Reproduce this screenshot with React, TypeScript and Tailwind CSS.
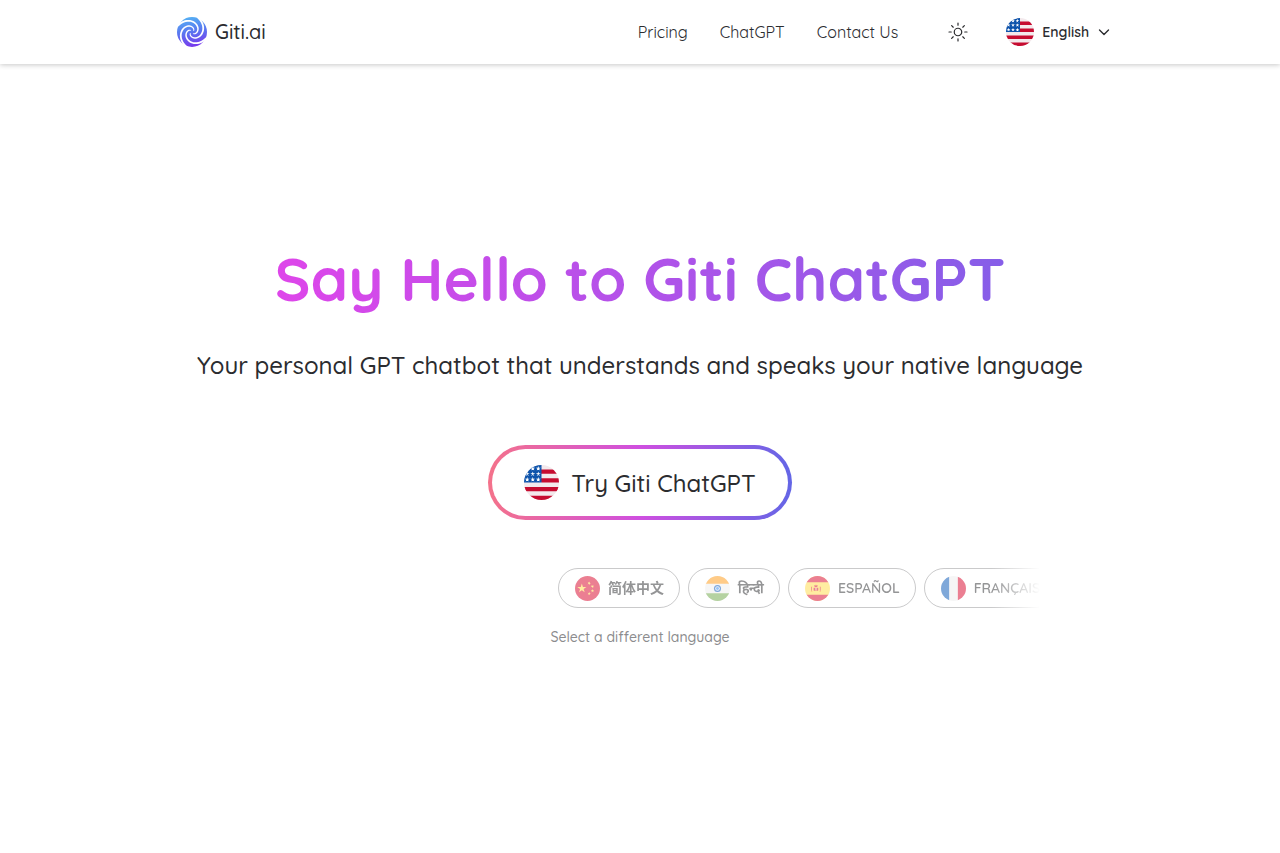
import React from 'react';

const STARS =
    'm187 243 57-41h-70l57 41-22-67zm-81 0 57-41H93l57 41-22-67zm-81 0 57-41H12l57 41-22-67zm162-81 57-41h-70l57 41-22-67zm-81 0 57-41H93l57 41-22-67zm-81 0 57-41H12l57 41-22-67Zm162-82 57-41h-70l57 41-22-67Zm-81 0 57-41H93l57 41-22-67zm-81 0 57-41H12l57 41-22-67Z';

const CN_STARS =
    'm140.1 155.8 22.1 68h71.5l-57.8 42.1 22.1 68-57.9-42-57.9 42 22.2-68-57.9-42.1H118zm163.4 240.7-16.9-20.8-25 9.7 14.5-22.5-16.9-20.9 25.9 6.9 14.6-22.5 1.4 26.8 26 6.9-25.1 9.6zm33.6-61 8-25.6-21.9-15.5 26.8-.4 7.9-25.6 8.7 25.4 26.8-.3-21.5 16 8.6 25.4-21.9-15.5zm45.3-147.6L370.6 212l19.2 18.7-26.5-3.8-11.8 24-4.6-26.4-26.6-3.8 23.8-12.5-4.6-26.5 19.2 18.7zm-78.2-73-2 26.7 24.9 10.1-26.1 6.4-1.9 26.8-14.1-22.8-26.1 6.4 17.3-20.5-14.2-22.7 24.9 10.1z';

type Country = 'us' | 'cn' | 'in' | 'es' | 'fr';

const FLAG_ART: Record<Country, React.ReactNode> = {
    us: (
        <>
            <path fill="#f3e9ec" d="M0 0h512v512H0z" />
            <path fill="#c60c30" d="M224 64h288v64H224Zm0 128h288v64H256ZM0 320h512v64H0Zm0 128h512v64H0Z" />
            <path fill="#0d53ab" d="M0 0h256v256H0Z" />
            <path fill="#fff" d={STARS} />
        </>
    ),
    cn: (
        <>
            <path fill="#d80027" d="M0 0h512v512H0z" />
            <path fill="#ffda44" d={CN_STARS} />
        </>
    ),
    in: (
        <>
            <path fill="#eee" d="M0 0h512v512H0z" />
            <path fill="#ff9811" d="M0 0h512v160H0z" />
            <path fill="#6da544" d="M0 352h512v160H0z" />
            <circle cx="256" cy="256" r="72" fill="#0052b4" />
            <circle cx="256" cy="256" r="48" fill="#eee" />
            <circle cx="256" cy="256" r="30" fill="#338af3" />
        </>
    ),
    es: (
        <>
            <path fill="#ffda44" d="M0 0h512v512H0z" />
            <path fill="#d80027" d="M0 0h512v128H0zM0 384h512v128H0z" />
            <path fill="#d80027" d="M144 304h-16v-80h16zm160 0h16v-80h-16zM176 240h44v52c0 14-44 14-44 0zM232 240h40v52c0 14-40 14-40 0zM188 190h72l-10 34h-52z" />
            <path fill="#ff9811" d="M120 208h32v14h-32zm176 0h32v14h-32zM120 306h32v14h-32zm176 0h32v14h-32zM216 172h16v24h-16z" />
            <circle cx="224" cy="264" r="14" fill="#eee" />
        </>
    ),
    fr: (
        <>
            <path fill="#eee" d="M167 0h178v512H167z" />
            <path fill="#0052b4" d="M0 0h167v512H0z" />
            <path fill="#d80027" d="M345 0h167v512H345z" />
        </>
    ),
};

const Flag: React.FC<{ country: Country; className: string }> = ({ country, className }) => (
    <svg viewBox="0 0 512 512" aria-hidden="true" className={`shrink-0 rounded-full ${className}`}>
        {FLAG_ART[country]}
    </svg>
);

// One tapered gap of the swirl, wide at the rim and thin at the centre
const swirlGap = (start: number) => {
    const steps = 28;
    const outer: string[] = [];
    const inner: string[] = [];
    for (let i = 0; i <= steps; i++) {
        const t = i / steps;
        const angle = ((start + 215 * t) * Math.PI) / 180;
        const radius = 32 - 28 * Math.pow(t, 0.85);
        const half = 2 - 0.5 * t;
        outer.push(`${30 + (radius + half) * Math.cos(angle)} ${30 + (radius + half) * Math.sin(angle)}`);
        inner.unshift(`${30 + (radius - half) * Math.cos(angle)} ${30 + (radius - half) * Math.sin(angle)}`);
    }
    return `M${[...outer, ...inner].join('L')}Z`;
};

const Logo: React.FC = () => (
    <svg viewBox="0 0 60 60" aria-hidden="true" className="size-[30px]">
        <defs>
            <linearGradient id="swirl" x1="0.4" y1="0" x2="0.6" y2="1">
                <stop offset="0" stopColor="#55b0f3" />
                <stop offset="0.5" stopColor="#5a74f0" />
                <stop offset="1" stopColor="#7a35ec" />
            </linearGradient>
        </defs>
        <circle cx="30" cy="30" r="30" fill="url(#swirl)" />
        {[20, 110, 200, 290].map(start => (
            <path key={start} fill="#fff" d={swirlGap(start)} />
        ))}
    </svg>
);

const NAV_LINKS = ['Pricing', 'ChatGPT', 'Contact Us'];

const LANGUAGES: { country: Country; label: string }[] = [
    { country: 'cn', label: '简体中文' },
    { country: 'in', label: 'हिन्दी' },
    { country: 'es', label: 'ESPAÑOL' },
    { country: 'fr', label: 'FRANÇAIS' },
];

const Navbar: React.FC = () => (
    <header className="bg-white shadow-[0_1px_5px_rgba(0,0,0,0.22)]">
        <div className="mx-auto flex h-16 max-w-[942px] items-center justify-between pl-2">
            <a href="#" className="flex items-center gap-2 text-xl font-medium">
                <Logo /> Giti.ai
            </a>
            <div className="flex items-center">
                <nav className="flex gap-8">
                    {NAV_LINKS.map(link => (
                        <a key={link} href="#">{link}</a>
                    ))}
                </nav>
                <button type="button" aria-label="Toggle theme" className="ml-12">
                    <svg viewBox="0 0 24 24" fill="none" stroke="currentColor" strokeWidth="1.2" strokeLinecap="round" className="size-6">
                        <path d="M12 3v2.25m6.364.386-1.591 1.591M21 12h-2.25m-.386 6.364-1.591-1.591M12 18.75V21m-4.773-4.227-1.591 1.591M5.25 12H3m4.227-4.773L5.636 5.636M15.75 12a3.75 3.75 0 1 1-7.5 0 3.75 3.75 0 0 1 7.5 0Z" />
                    </svg>
                </button>
                <button type="button" className="ml-9 flex items-center gap-2 text-sm font-semibold">
                    <Flag country="us" className="size-7" />
                    English
                    <svg viewBox="0 0 14 14" fill="none" stroke="currentColor" strokeWidth="1.4" strokeLinecap="round" strokeLinejoin="round" className="size-[14px]">
                        <path d="M2.5 5 7 9.5 11.5 5" />
                    </svg>
                </button>
            </div>
        </div>
    </header>
);

export default function App() {
    return (
        <div className="min-h-screen bg-white font-['Quicksand','Lato','Noto_Sans_CJK_SC',sans-serif] text-[#2b2c2f]">
            <Navbar />
            <main className="flex flex-col items-center pt-[175px] pb-20">
                <h1 className="bg-linear-to-r/srgb from-[#de46ea] to-[#865ee8] bg-clip-text text-center text-6xl leading-20 font-bold text-transparent">
                    Say Hello to Giti ChatGPT
                </h1>
                <p className="mt-[30px] text-center text-2xl font-medium">
                    Your personal GPT chatbot that understands and speaks your native language
                </p>

                <a href="#" className="mt-16 rounded-full bg-linear-to-r/srgb from-[#f4728a] via-[#cf4fe0] to-[#6366e6] p-1">
                    <span className="flex h-[67px] items-center gap-3 rounded-full bg-white px-8 text-2xl font-medium">
                        <Flag country="us" className="size-[35px]" />
                        Try Giti ChatGPT
                    </span>
                </a>

                {/* Language strip, fading out at both ends */}
                <div className="mt-12 flex w-full max-w-[800px] gap-2 overflow-hidden mask-x-from-94% pl-[318px]">
                    {LANGUAGES.map(({ country, label }) => (
                        <button
                            key={country}
                            type="button"
                            className="flex h-10 shrink-0 items-center gap-2 rounded-full border border-[#2b2c2f]/50 pr-[15px] pl-4 text-sm font-semibold opacity-50"
                        >
                            <Flag country={country} className="size-[25px]" />
                            {label}
                        </button>
                    ))}
                </div>
                <p className="mt-[19px] text-sm font-medium text-[#8c8c8e]">Select a different language</p>
            </main>
        </div>
    );
}
